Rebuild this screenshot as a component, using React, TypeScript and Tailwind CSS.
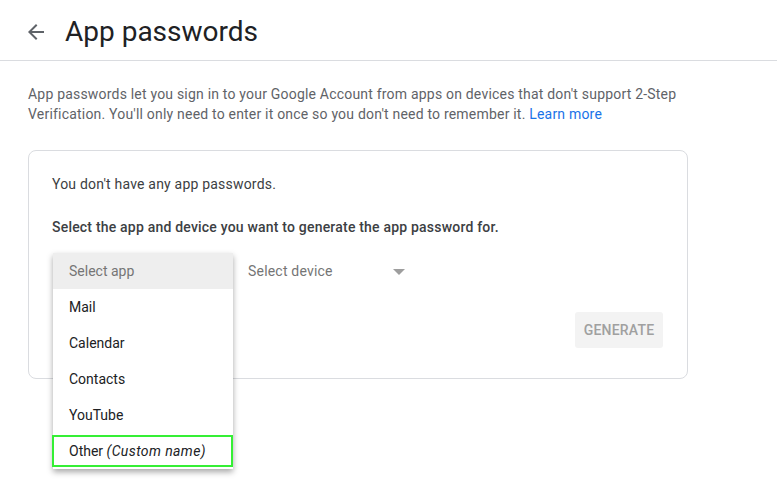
import React from "react";

const items = ["Mail", "Calendar", "Contacts", "YouTube"];

export default function App() {
  return (
    <div className="w-[777px] h-[503px] bg-white overflow-hidden" style={{ fontFamily: "Roboto, 'Liberation Sans', sans-serif" }}>
      <div className="h-[61px] border-b border-[#dadce0] flex items-center pl-[24px]">
        <svg width="24" height="24" viewBox="0 0 24 24" className="mt-[4px]">
          <path d="M20 11H7.83l5.59-5.59L12 4l-8 8 8 8 1.41-1.41L7.83 13H20v-2z" fill="#5f6368" />
        </svg>
        <h1 className="ml-[17px] text-[28px] leading-[36px] text-[#202124] mt-[3px]">App passwords</h1>
      </div>
      <div className="pl-[28px]">
        <p className="mt-[23px] w-[680px] text-[14px] leading-[20px] tracking-[0.2px] text-[#5f6368]">
          App passwords let you sign in to your Google Account from apps on devices that don't support 2-Step Verification. You'll only need to enter it once so you don't need to remember it.{" "}
          <span className="text-[#1a73e8]">Learn more</span>
        </p>
        <div className="mt-[26px] w-[660px] h-[229px] border border-[#dadce0] rounded-[8px] px-[23px] pt-[23px]">
          <p className="text-[14px] leading-[20px] tracking-[0.2px] text-[#3c4043]">You don't have any app passwords.</p>
          <p className="mt-[23px] text-[14px] leading-[20px] tracking-[0.2px] text-[#3c4043] font-medium">
            Select the app and device you want to generate the app password for.
          </p>
          <div className="mt-[16px] flex h-[36px]">
            <div className="relative w-[180px] ml-[1px]">
              <div className="absolute left-0 top-0 w-[180px] bg-white shadow-[0_3px_6px_rgba(0,0,0,0.35)] z-10">
                <div className="h-[36px] bg-[#eeeeee] pl-[16px] flex items-center text-[14px] text-[#757575]">Select app</div>
                {items.map((t) => (
                  <div key={t} className="h-[36px] pl-[16px] flex items-center text-[14px] text-[#202124]">{t}</div>
                ))}
                <div className="h-[36px] flex items-center">
                  <div className="h-[32px] w-[181px] -ml-[1px] border-2 border-[#35ef35] pl-[15px] flex items-center text-[14px] text-[#202124]">
                    Other&nbsp;<span className="italic tracking-[0.4px]">(Custom name)</span>
                  </div>
                </div>
              </div>
            </div>
            <div className="w-[180px] pl-[15px] flex items-center text-[14px] tracking-[0.2px] text-[#757575] relative">
              Select device
              <svg width="12" height="6" viewBox="0 0 12 6" className="absolute left-[160px] top-[16px]">
                <path d="M0 0h12L6 6z" fill="#9e9e9e" />
              </svg>
            </div>
          </div>
          <div className="mt-[23px] flex justify-end pr-[1px]">
            <div className="h-[36px] w-[88px] rounded-[3px] bg-[#f3f3f3] flex items-center justify-center text-[14px] font-medium text-[#a0a0a0] tracking-[0.2px]">
              GENERATE
            </div>
          </div>
        </div>
      </div>
    </div>
  );
}
